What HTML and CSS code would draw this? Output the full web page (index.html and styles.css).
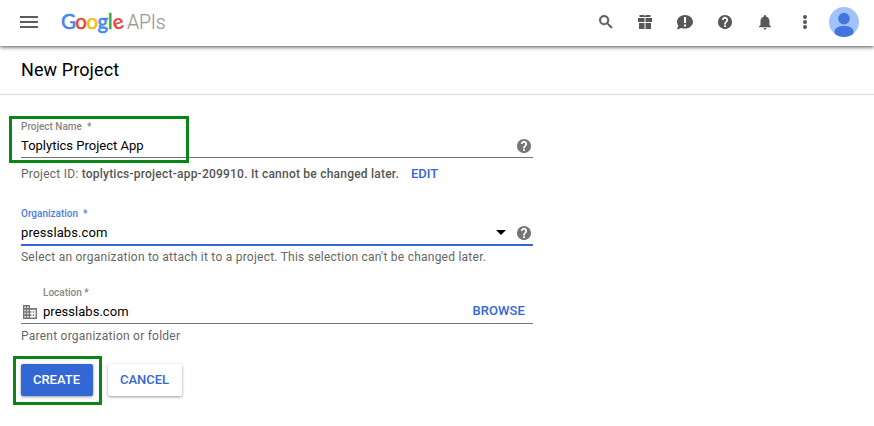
FILE: index.html
```html
<!DOCTYPE html>
<html lang="en">
<head>
<meta charset="utf-8">
<title>New Project</title>
<link rel="stylesheet" href="styles.css">
</head>
<body>
<header class="topbar">
  <svg class="menu" viewBox="0 0 18 12"><path d="M0 0h18v2H0zM0 5h18v2H0zM0 10h18v2H0z"/></svg>
  <div class="logo"><span class="google"><span class="blue">G</span><span class="red">o</span><span class="yellow">o</span><span class="blue">g</span><span class="green">l</span><span class="red e">e</span></span><span class="apis">APIs</span></div>
  <nav class="tools">
    <svg class="search" viewBox="0 0 24 24"><path d="M15.5 14h-.79l-.28-.27A6.47 6.47 0 0 0 16 9.5 6.5 6.5 0 1 0 9.5 16c1.61 0 3.09-.59 4.23-1.57l.27.28v.79l5 4.99L20.49 19l-4.99-5zm-6 0C7.01 14 5 11.99 5 9.5S7.01 5 9.5 5 14 7.01 14 9.5 11.99 14 9.5 14z"/></svg>
    <svg viewBox="0 0 18 18"><path d="M2 5h6.500v4H2zM9.500 5H16v4H9.500zM3 10h5.500v6H3zM9.500 10H15v6H9.500zM3.500 2h4.500l1 1 1-1h4.500v2h-11z"/></svg>
    <svg viewBox="0 0 18 18"><path fill-rule="evenodd" d="M9 2c4.400 0 8 3 8 6.800s-3.600 6.800-8 6.800c-1.200 0-2.400-.2-3.400-.6L1 16.500l1.200-3.900A6.200 6.200 0 0 1 1 8.800C1 5 4.600 2 9 2zM8 4v6h2V4zM8 11.500v2h2v-2z"/></svg>
    <svg viewBox="0 0 24 24"><path d="M12 2.500a9.500 9.500 0 1 0 0 19 9.500 9.500 0 0 0 0-19zm1.200 16.200h-2.400v-2.400h2.400zm2.200-7.200-.9.900c-.8.800-1.300 1.400-1.300 2.800h-2.400v-.5c0-1.100.5-2.100 1.200-2.800l1.200-1.200a1.800 1.800 0 1 0-3.100-1.300H7.900a4.100 4.100 0 1 1 7.500 2.100z"/></svg>
    <svg viewBox="0 0 24 24"><path d="M12 22c1.100 0 2-.9 2-2h-4c0 1.100.9 2 2 2zm6-6v-5c0-3.070-1.640-5.640-4.500-6.320V4a1.500 1.500 0 0 0-3 0v.68C7.630 5.360 6 7.920 6 11v5l-2 2v1h16v-1z"/></svg>
    <svg viewBox="0 0 18 18"><circle cx="9" cy="4" r="2.050"/><circle cx="9" cy="9" r="2.050"/><circle cx="9" cy="14" r="2.050"/></svg>
  </nav>
  <svg class="avatar" viewBox="0 0 30 30"><circle cx="15" cy="15" r="15" fill="#a1c2fa"/><circle cx="15" cy="11.600" r="5.800" fill="#4374e0"/><path fill="#4374e0" d="M5.700 26.700v-2.500C5.700 21 9.800 19 15 19s9.300 2 9.300 5.200v2.500A15 15 0 0 1 15 30a15 15 0 0 1-9.300-3.300z"/></svg>
</header>
<div class="titlebar"><h1>New Project</h1></div>
<main class="form">
  <section class="field name">
    <div class="label">Project Name&nbsp; *</div>
    <div class="control"><span class="value">Toplytics Project App</span>
      <svg class="help" viewBox="0 0 24 24"><path d="M12 2.500a9.500 9.500 0 1 0 0 19 9.500 9.500 0 0 0 0-19zm1.200 16.200h-2.400v-2.400h2.400zm2.200-7.200-.9.900c-.8.800-1.300 1.400-1.300 2.800h-2.400v-.5c0-1.100.5-2.100 1.200-2.800l1.200-1.200a1.800 1.800 0 1 0-3.100-1.300H7.900a4.100 4.100 0 1 1 7.500 2.100z"/></svg></div>
    <div class="hint">Project ID: <b>toplytics-project-app-209910. It cannot be changed later.</b><a class="edit">EDIT</a></div>
    <div class="highlight"></div>
  </section>
  <section class="field org">
    <div class="label">Organization&nbsp; *</div>
    <div class="control"><span class="value">presslabs.com</span>
      <svg class="caret" viewBox="0 0 10 5"><path d="M0 0h10L5 5z"/></svg>
      <svg class="help" viewBox="0 0 24 24"><path d="M12 2.500a9.500 9.500 0 1 0 0 19 9.500 9.500 0 0 0 0-19zm1.200 16.200h-2.400v-2.400h2.400zm2.200-7.200-.9.900c-.8.800-1.300 1.400-1.300 2.800h-2.400v-.5c0-1.100.5-2.100 1.200-2.800l1.200-1.200a1.800 1.800 0 1 0-3.100-1.300H7.900a4.100 4.100 0 1 1 7.500 2.100z"/></svg></div>
    <div class="hint">Select an organization to attach it to a project. This selection can't be changed later.</div>
  </section>
  <section class="field location">
    <div class="label">Location *</div>
    <div class="control">
      <svg class="building" viewBox="2 3 20 18" preserveAspectRatio="none"><path d="M12 7V3H2v18h20V7zM6 19H4v-2h2zm0-4H4v-2h2zm0-4H4V9h2zm0-4H4V5h2zm4 12H8v-2h2zm0-4H8v-2h2zm0-4H8V9h2zm0-4H8V5h2zm10 12h-8v-2h2v-2h-2v-2h2v-2h-2V9h8zm-2-8h-2v2h2zm0 4h-2v2h2z"/></svg>
      <span class="value">presslabs.com</span><a class="browse">BROWSE</a></div>
    <div class="hint">Parent organization or folder</div>
  </section>
  <div class="actions">
    <div class="create-wrap"><button class="btn primary">CREATE</button><div class="highlight"></div></div>
    <button class="btn">CANCEL</button>
  </div>
</main>
</body>
</html>
```
FILE: styles.css
```css
* { box-sizing: border-box; }
body { margin: 0; min-height: 426px; background: #fff; color: #000; font-family: Roboto, sans-serif; font-size: 13px; }
svg { display: block; flex: none; }
.topbar { display: flex; align-items: center; height: 46px; padding: 0 15px 2px 20px; box-shadow: 0 1px 4px rgba(0,0,0,.7); }
.menu { width: 18px; height: 12px; fill: #5c5c5c; }
.logo { display: flex; align-items: baseline; margin-left: 22px; line-height: 30px; white-space: nowrap; }
.google { font-family: Lato, sans-serif; font-size: 20.500px; letter-spacing: -.5px; width: 67px; padding-left: 1px; -webkit-text-stroke: .55px; }
.apis { font-size: 19.500px; font-weight: 300; color: #999; letter-spacing: -.2px; -webkit-text-stroke: .2px; }
.blue { color: #4285f4; }
.red { color: #ea4335; }
.yellow { color: #fbbc05; }
.green { color: #34a853; }
.e { display: inline-block; line-height: 1; transform: rotate(-18deg); }
.tools { display: flex; gap: 22px; margin-left: auto; }
.tools svg { width: 18px; height: 18px; fill: #575757; }
.tools .search { stroke: #575757; stroke-width: .7px; transform: translateX(1px); }
.avatar { width: 30px; height: 30px; margin-left: 15px; }
.titlebar { height: 49px; border-bottom: 1px solid #ddd; padding-left: 21px; }
h1 { margin: 0; font-size: 18px; font-weight: 400; line-height: 48px; letter-spacing: .1px; }
.form { width: 533px; padding: 26px 0 0 21px; }
.field { position: relative; }
.label { font-size: 10px; font-weight: 500; line-height: 12px; color: #878787; letter-spacing: 0; }
.control { display: flex; align-items: center; height: 25px; border-bottom: 1px solid #757575; }
.value { flex: 1; letter-spacing: 0; }
.org .value { letter-spacing: .1px; }
.help { width: 18px; height: 18px; margin-top: 2px; fill: #757575; }
.hint { font-size: 12px; line-height: 16px; letter-spacing: .24px; color: #666; white-space: nowrap; }
.hint b { font-weight: 500; color: #555; letter-spacing: .22px; }
.edit, .browse { font-size: 13px; font-weight: 500; color: #3367d6; }
.edit { margin-left: 12px; letter-spacing: 0; }
.name .hint { margin-top: 8px; }
.org { margin-top: 26px; }
.org .label { color: #4c7de2; }
.org .control { height: 26px; border-bottom: 2px solid #3367d6; }
.org .hint { margin-top: 3px; }
.caret { width: 10px; height: 5px; margin-right: 9px; margin-top: 1px; }
.location { margin-top: 22px; }
.location .label { padding-left: 22px; }
.location .hint { margin-top: 4px; }
.building { width: 14px; height: 14px; margin: 1px 6px 0 2px; fill: #757575; }
.location .value { letter-spacing: .03px; }
.browse { margin-right: 8px; padding-bottom: 2px; letter-spacing: .1px; }
.actions { display: flex; gap: 15px; margin-top: 20px; }
.create-wrap { position: relative; }
.btn { display: block; width: 74px; height: 32px; padding: 0 1px 2px 0; border: 0; border-radius: 2px; background: #fff; color: #3367d6; font: 500 13px Roboto, sans-serif; box-shadow: 0 1px 3px rgba(0,0,0,.4); }
.primary { width: 72px; background: #3367d6; color: #fff; }
.highlight { position: absolute; border: 3px solid #0a8518; }
.name .highlight { left: -12px; top: -5px; width: 180px; height: 47px; }
.create-wrap .highlight { left: -8px; top: -8px; width: 89px; height: 49px; }
```
